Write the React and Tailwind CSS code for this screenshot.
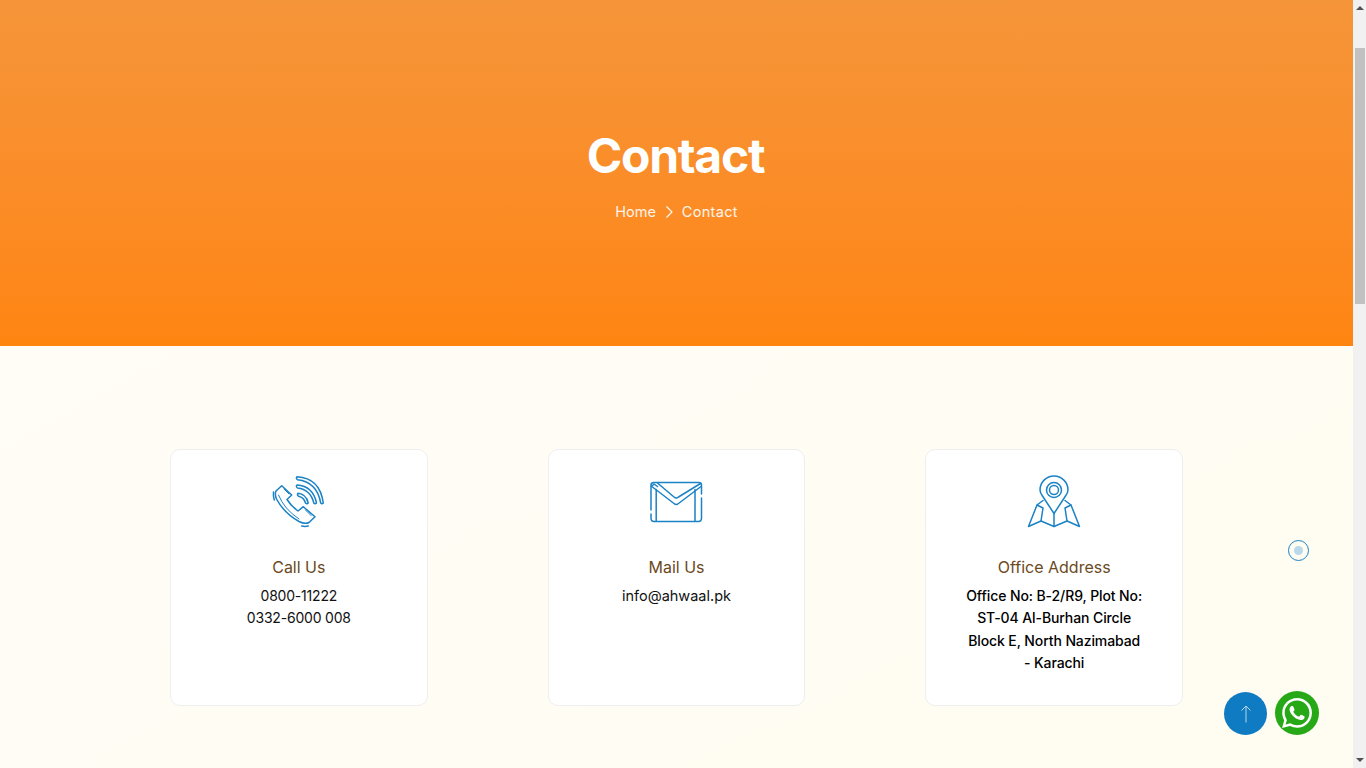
import React from "react";

function PhoneIcon() {
  return (
    <svg width="54" height="54" viewBox="0 0 54 54" fill="none" stroke="#1b82c5" strokeWidth="1.5" strokeLinecap="round" strokeLinejoin="round">
      <path d="M9.700 11.700 L19.700 21 L15 25.500 Q19 32 26 37 L31.300 32.700 L43 42.700 L37 48.500 Q33 50.500 27 47.500 Q12 39 4.500 25 Q2.500 20 4 17 Z" />
      <path d="M12 15 L17 20 M33.500 36 L39 41.500 M6.500 21 Q12 35 27 45" strokeWidth="1" />
      <path d="M1.500 18 Q1 22 2.300 26" />
      <path d="M29.700 52 Q33 52.800 36.300 52" />
      <path d="M25 2.700 Q48 4 51.300 29 Q50 30.500 48.700 29 Q45 8 25.500 5.800 Q23.500 4 25 2.700 Z" />
      <path d="M25 11 Q41 12 44.500 29 Q43 30.500 41.800 29 Q38.500 15.500 25.500 14 Q23.500 12.500 25 11 Z" />
      <path d="M26 19.300 Q34 20 36.200 29 Q35 30.500 33.500 29 Q32 23.500 26.500 22.300 Q24.800 20.800 26 19.300 Z" />
    </svg>
  );
}

function MailIcon() {
  return (
    <svg width="54" height="54" viewBox="0 0 54 54" fill="none" stroke="#1b82c5" strokeWidth="1.5" strokeLinecap="round" strokeLinejoin="round">
      <path d="M2 36 V11 Q2 8.500 5 8.500 H49.500 Q52.500 8.500 52.500 11 V20 M52.500 24 V44 Q52.500 47.500 49.500 47.500 H5 Q2 47.500 2 44 V40" />
      <path d="M7.200 15.500 V47 M46 15.500 V47" />
      <path d="M8.500 9 L25 23 Q27.200 25 29.500 23 L51.500 9.500" />
      <path d="M2.500 12.500 L5 10 L8.500 12.500 M3.500 13 L25 29.500 Q27.200 31.500 29.500 29.500 L52 12.500" />
    </svg>
  );
}

function MapIcon() {
  return (
    <svg width="54" height="54" viewBox="0 0 54 54" fill="none" stroke="#1b82c5" strokeWidth="1.5" strokeLinecap="round" strokeLinejoin="round">
      <path d="M27 39.500 L15.500 22 Q13 18.500 13 16 A14 14 0 0 1 41 16 Q41 18.500 38.500 22 Z" />
      <circle cx="27" cy="16" r="7.500" />
      <circle cx="27" cy="16" r="4.500" />
      <path d="M16 26.500 L10 31 L1.500 52.500 L14 47 L27 52.500 L40 47 L52.500 52.500 L44 31 L38 26.500" />
      <path d="M10 31 L16 34 L14 47 M44 31 L38 34 L40 47 M27 39.500 V52.500" />
    </svg>
  );
}

function Card({ icon, title, children }) {
  return (
    <div className="h-[257px] rounded-[10px] border border-[#eeeeee] bg-white px-[38px] pt-[24px] text-center">
      <div className="flex h-[54px] justify-center">{icon}</div>
      <h3 className="mt-[27px] text-[16px] leading-[24px] font-normal text-[#6b4a1e]">{title}</h3>
      <div className="mt-[5px] pt-[0.5px] text-[14px] leading-[22.5px] text-[#111111]">{children}</div>
    </div>
  );
}

export default function App() {
  return (
    <div className="flex h-[768px] w-[1366px] overflow-hidden font-['Inter','Noto_Sans',sans-serif]">
      <main className="relative w-[1353px] bg-gradient-to-br from-[#fffdf8] to-[#fffcf1]">
        <section className="flex h-[346px] flex-col items-center bg-gradient-to-b from-[#f59539] to-[#ff8510] pt-[124px] text-white">
          <h1 className="pr-[2px] text-[48px] leading-[64px] font-bold tracking-[-1.25px]">Contact</h1>
          <nav className="mt-[13px] flex items-center text-[14.5px] leading-[22px] text-white/90">
            <span>Home</span>
            <svg className="mx-[8px]" width="10" height="14" viewBox="0 0 10 14" fill="none" stroke="#ffffff" strokeWidth="1.1">
              <path d="M2.500 1.500 L8 7 L2.500 12.500" />
            </svg>
            <span className="tracking-[0.3px]">Contact</span>
          </nav>
        </section>
        <section className="mx-auto mt-[103px] grid w-[1013px] grid-cols-3 gap-[120px]">
          <Card icon={<PhoneIcon />} title="Call Us">
            <p className="tracking-[-0.2px]">0800-11222</p>
            <p className="tracking-[-0.2px]">0332-6000 008</p>
          </Card>
          <Card icon={<MailIcon />} title="Mail Us">
            <p className="text-[14.5px]">info@ahwaal.pk</p>
          </Card>
          <Card icon={<MapIcon />} title="Office Address">
            <p className="font-medium tracking-[-0.1px] text-black">Office No: B-2/R9, Plot No: ST-04 Al-Burhan Circle Block E, North Nazimabad - Karachi</p>
          </Card>
        </section>
        <div className="absolute top-[540px] left-[1288px] flex h-[21px] w-[21px] items-center justify-center rounded-full border border-[#1b82c5]">
          <div className="h-[9px] w-[9px] rounded-full bg-[#b9d8ea]" />
        </div>
        <button className="absolute top-[692px] left-[1224px] flex h-[43px] w-[43px] items-center justify-center rounded-full bg-[#0f7bc2]">
          <svg width="12" height="18" viewBox="0 0 12 18" fill="none" stroke="#b9d8ea" strokeWidth="1">
            <path d="M6 17.500 V1 M1.500 5.500 L6 1 L10.500 5.500" />
          </svg>
        </button>
        <div className="absolute top-[691px] left-[1275px] flex h-[44px] w-[44px] items-center justify-center rounded-full bg-[#27a816]">
          <svg width="30" height="30" viewBox="0 0 24 24" fill="#ffffff">
            <path d="M17.472 14.382c-.297-.149-1.758-.867-2.03-.967-.273-.099-.471-.148-.67.15-.197.297-.767.966-.94 1.164-.173.199-.347.223-.644.075-.297-.15-1.255-.463-2.39-1.475-.883-.788-1.48-1.761-1.653-2.059-.173-.297-.018-.458.13-.606.134-.133.298-.347.446-.52.149-.174.198-.298.298-.497.099-.198.05-.371-.025-.52-.075-.149-.669-1.612-.916-2.207-.242-.579-.487-.5-.669-.51-.173-.008-.371-.01-.57-.01-.198 0-.52.074-.792.372-.272.297-1.04 1.016-1.04 2.479 0 1.462 1.065 2.875 1.213 3.074.149.198 2.096 3.2 5.077 4.487.709.306 1.262.489 1.694.625.712.227 1.36.195 1.871.118.571-.085 1.758-.719 2.006-1.413.248-.694.248-1.289.173-1.413-.074-.124-.272-.198-.57-.347m-5.421 7.403h-.004a9.87 9.87 0 01-5.031-1.378l-.361-.214-3.741.982.998-3.648-.235-.374a9.86 9.86 0 01-1.51-5.26c.001-5.45 4.436-9.884 9.888-9.884 2.64 0 5.122 1.03 6.988 2.898a9.825 9.825 0 012.893 6.994c-.003 5.45-4.437 9.884-9.885 9.884m8.413-18.297A11.815 11.815 0 0012.05 0C5.495 0 .16 5.335.157 11.892c0 2.096.547 4.142 1.588 5.945L.057 24l6.305-1.654a11.882 11.882 0 005.683 1.448h.005c6.554 0 11.89-5.335 11.893-11.893a11.821 11.821 0 00-3.48-8.413Z" />
          </svg>
        </div>
      </main>
      <aside className="flex w-[13px] flex-col items-center bg-[#f1f1f1]">
        <div className="mt-[6px] h-0 w-0 border-x-[4px] border-b-[4px] border-x-transparent border-b-[#505050]" />
        <div className="mt-[38px] h-[256px] w-[10px] bg-[#c1c1c1]" />
        <div className="mt-auto mb-[6px] h-0 w-0 border-x-[4px] border-t-[4px] border-x-transparent border-t-[#505050]" />
      </aside>
    </div>
  );
}
